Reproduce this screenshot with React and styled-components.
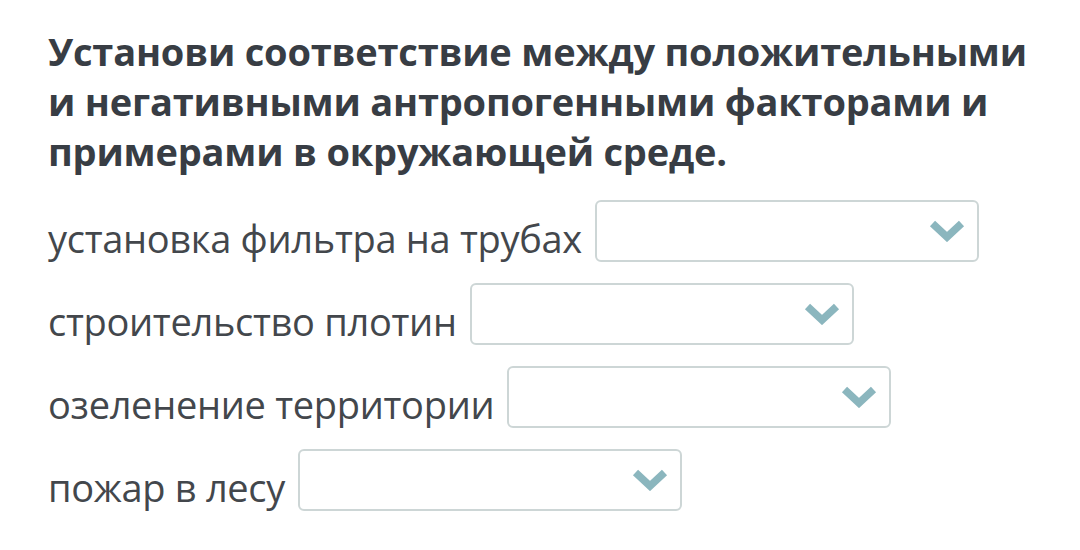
import React from "react";
import styled, { createGlobalStyle } from "styled-components";

const Global = createGlobalStyle`
  html, body { margin: 0; padding: 0; background: #ffffff; }
  body { font-family: "Open Sans", "Noto Sans", sans-serif; }
`;

const Page = styled.div`
  padding: 26px 40px 0 48px;
  display: flex;
  flex-direction: column;
`;

const Title = styled.h1`
  margin: 0;
  font-size: 38px;
  line-height: 50px;
  font-weight: 700;
  letter-spacing: -0.2px;
  color: #383d44;
`;

const List = styled.div`
  margin-top: 24px;
  display: flex;
  flex-direction: column;
  gap: 21px;
`;

const Row = styled.div`
  display: flex;
  align-items: flex-end;
  gap: 13px;
`;

const Label = styled.span`
  font-size: 38px;
  line-height: 48px;
  letter-spacing: -0.3px;
  color: #43474c;
  white-space: nowrap;
`;

const Select = styled.div`
  box-sizing: border-box;
  width: 384px;
  height: 62px;
  border: 2px solid #cdd6d6;
  border-radius: 6px;
  background: #fff;
  display: flex;
  align-items: center;
  justify-content: flex-end;
  padding-right: 12px;
`;

const Chevron = () => (
  <svg width="36" height="22" viewBox="0 0 36 22">
    <polyline
      points="3.5,3.5 18,17 32.5,3.5"
      fill="none"
      stroke="#8bb6be"
      strokeWidth="7.5"
      strokeLinejoin="miter"
    />
  </svg>
);

const items = [
  "установка фильтра на трубах",
  "строительство плотин",
  "озеленение территории",
  "пожар в лесу",
];

export default function App() {
  return (
    <>
      <Global />
      <Page>
        <Title>
          Установи соответствие между положительными и негативными антропогенными факторами и примерами в окружающей среде.
        </Title>
        <List>
          {items.map((t) => (
            <Row key={t}>
              <Label>{t}</Label>
              <Select>
                <Chevron />
              </Select>
            </Row>
          ))}
        </List>
      </Page>
    </>
  );
}
